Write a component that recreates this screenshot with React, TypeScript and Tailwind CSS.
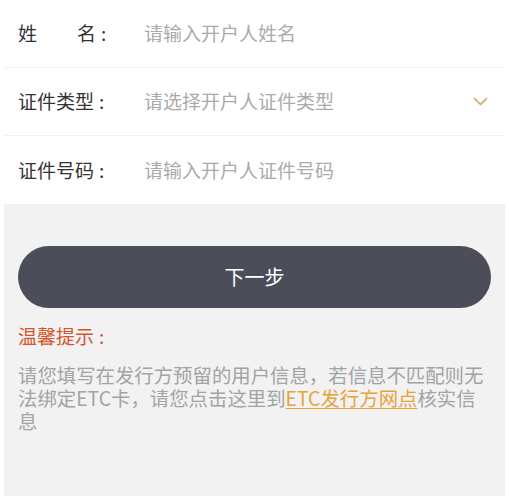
import { useState } from "react"

const font = { fontFamily: '"Noto Sans CJK SC", "Noto Sans", sans-serif' }

function Field({ label, placeholder, select, last }: { label: React.ReactNode; placeholder: string; select?: boolean; last?: boolean }) {
  const [value, setValue] = useState("")
  return (
    <div className={`flex items-center h-[68px] pl-[14px] pr-[17px] ${last ? "" : "border-b border-[#f1f1f1]"}`}>
      <div className="w-[126px] shrink-0 text-[19px] text-[#333333] flex">{label}</div>
      {select ? (
        <div className="flex-1 text-[19px] text-[#aaaaaa]">{placeholder}</div>
      ) : (
        <input
          value={value}
          onChange={(e) => setValue(e.target.value)}
          placeholder={placeholder}
          className="flex-1 min-w-0 bg-transparent outline-none text-[19px] text-[#333333] placeholder:text-[#aaaaaa]"
          style={font}
        />
      )}
      {select && (
        <svg width="15" height="9" viewBox="0 0 15 9" fill="none" className="shrink-0">
          <polyline points="1.5,1.5 7.5,7.5 13.5,1.5" stroke="#d9a857" strokeWidth="1.7" strokeLinecap="round" strokeLinejoin="round" />
        </svg>
      )}
    </div>
  )
}

export default function App() {
  return (
    <div className="min-h-screen bg-white px-[4px]" style={font}>
      <div className="min-h-[496px] bg-[#f2f2f2]">
        {/* Form */}
        <div className="bg-white">
          <Field
            label={
              <>
                <span>姓</span>
                <span className="ml-[40px]">名</span>
                <span className="ml-[5px]">:</span>
              </>
            }
            placeholder="请输入开户人姓名"
          />
          <Field
            label={
              <>
                <span>证件类型</span>
                <span className="ml-[5px]">:</span>
              </>
            }
            placeholder="请选择开户人证件类型"
            select
          />
          <Field
            label={
              <>
                <span>证件号码</span>
                <span className="ml-[5px]">:</span>
              </>
            }
            placeholder="请输入开户人证件号码"
            last
          />
        </div>

        {/* Next button */}
        <div className="px-[14px] pt-[42px]">
          <button className="w-full h-[62px] rounded-full bg-[#4b4d58] text-white text-[20px]">下一步</button>
        </div>

        {/* Tips */}
        <div className="px-[14px] pt-[14px]">
          <div className="text-[19px] text-[#d5552b] leading-[28px]">
            温馨提示<span className="ml-[5px]">:</span>
          </div>
          <p className="mt-[13px] text-[19.4px] leading-[23px] text-[#a3a3a3]">
            请您填写在发行方预留的用户信息，若信息不匹配则无法绑定ETC卡，请您点击这里到
            <a className="text-[#e8a23a] underline underline-offset-2">ETC发行方网点</a>
            核实信息
          </p>
        </div>
      </div>
    </div>
  )
}
